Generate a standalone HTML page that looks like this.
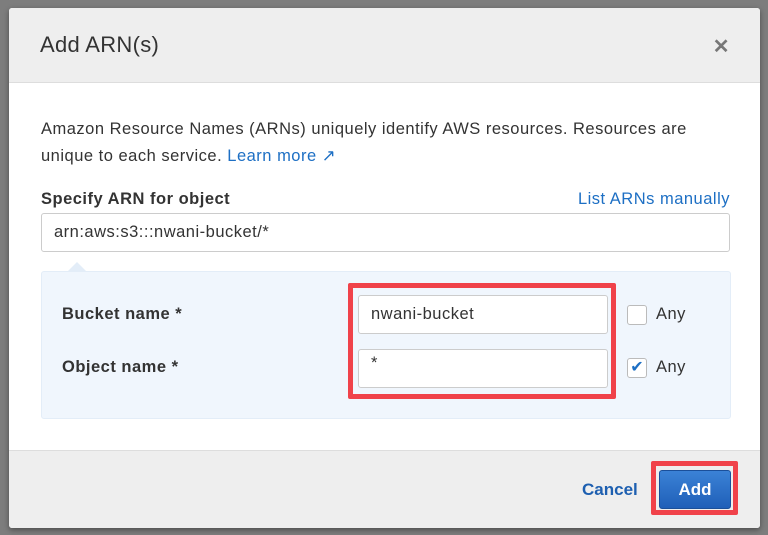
<!DOCTYPE html><html><head><style>
body{margin:0;width:768px;height:535px;background:#7d7d7d;font-family:"Liberation Sans",sans-serif;position:relative;overflow:hidden;letter-spacing:.5px}
.m{position:absolute;left:9px;top:8px;width:751px;height:520px;background:#fff;border-radius:3px;overflow:hidden;box-shadow:0 2px 6px rgba(0,0,0,.4)}
.h{position:absolute;left:0;top:0;right:0;height:74px;background:#eeeeee;border-bottom:1px solid #ddd}
.t{position:absolute;left:31px;top:24px;font-size:22px;color:#333;letter-spacing:.3px}
.x{position:absolute;right:30px;top:26px;font-size:20px;color:#777;font-weight:bold}
.p{position:absolute;left:32px;top:108px;font-size:16.5px;color:#333;line-height:27px;width:720px}
a{color:#1d6fc4;text-decoration:none}
.lb{position:absolute;left:32px;top:182px;font-size:16.5px;font-weight:bold;color:#333}
.lm{position:absolute;right:30px;top:182px;font-size:16.5px;color:#1d6fc4}
.in{position:absolute;background:#fff;border:1px solid #ccc;border-radius:3px;font-size:16.5px;color:#333;box-sizing:border-box;padding-left:12px}
.pn{position:absolute;left:32px;top:263px;width:688px;height:146px;background:#f0f6fd;border:1px solid #e3edf8;border-radius:3px}
.f{position:absolute;left:0;right:0;top:442px;bottom:0;background:#eeeeee;border-top:1px solid #ddd}
.red{position:absolute;border:5px solid #f0424a;border-radius:2px}
.cb{position:absolute;width:18px;height:18px;border:1px solid #bbb;border-radius:3px;background:#fff}
.lab{position:absolute;left:53px;font-size:16.5px;font-weight:bold;color:#333}
</style></head><body>
<div class="m">
<div class="h"><div class="t">Add ARN(s)</div><div class="x">✕</div></div>
<div class="p">Amazon Resource Names (ARNs) uniquely identify AWS resources. Resources are<br>unique to each service. <a>Learn more ↗</a></div>
<div class="lb">Specify ARN for object</div><div class="lm">List ARNs manually</div>
<div class="in" style="left:32px;top:205px;width:689px;height:39px;line-height:37px">arn:aws:s3:::nwani-bucket/*</div>
<div class="pn"></div>
<div style="position:absolute;left:58px;top:254px;width:0;height:0;border-left:10px solid transparent;border-right:10px solid transparent;border-bottom:10px solid #e3edf8"></div>
<div class="lab" style="top:297px">Bucket name *</div>
<div class="lab" style="top:350px">Object name *</div>
<div class="red" style="left:339px;top:275px;width:258px;height:106px"></div>
<div class="in" style="left:349px;top:287px;width:250px;height:39px;line-height:37px">nwani-bucket</div>
<div class="in" style="left:349px;top:341px;width:250px;height:39px;line-height:26px">*</div>
<div class="cb" style="left:618px;top:297px"></div><div style="position:absolute;left:647px;top:297px;font-size:16.5px;color:#333">Any</div>
<div class="cb" style="left:618px;top:350px;color:#1d6fc4;font-size:16px;line-height:18px;text-align:center;letter-spacing:0">✔</div><div style="position:absolute;left:647px;top:350px;font-size:16.5px;color:#333">Any</div>
<div class="f"></div>
<div style="position:absolute;left:573px;top:472px;font-size:17px;font-weight:bold;color:#1d5fb0;letter-spacing:0">Cancel</div>
<div class="red" style="left:642px;top:453px;width:77px;height:44px"></div>
<div style="position:absolute;left:650px;top:462px;width:70px;height:37px;background:linear-gradient(#3b82d6,#1f5fb8);border:1px solid #1a4f9a;border-radius:3px;color:#fff;font-weight:bold;font-size:17px;text-align:center;line-height:37px;letter-spacing:0">Add</div>
</div>
</body></html>
